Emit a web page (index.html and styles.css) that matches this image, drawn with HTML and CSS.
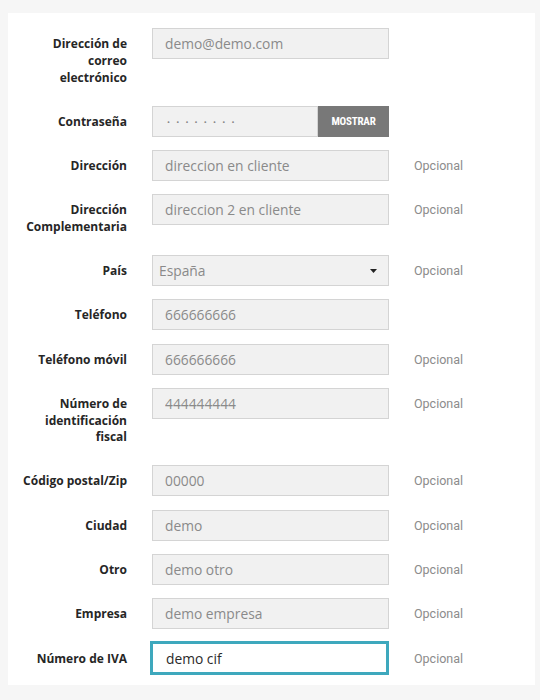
FILE: index.html
```html
<!DOCTYPE html>
<html lang="es">
<head>
<meta charset="utf-8">
<title>Datos del cliente</title>
<link rel="stylesheet" href="styles.css">
</head>
<body>
<main class="card">
  <form class="form">
    <div class="row">
      <label class="label" for="email">Dirección de correo electrónico</label>
      <div class="field"><input class="input" id="email" type="text" value="demo@demo.com"></div>
      <span class="note"></span>
    </div>
    <div class="row">
      <label class="label" for="pass">Contraseña</label>
      <div class="field group">
        <input class="input pass" id="pass" type="password" value="12345678">
        <button class="btn-show" type="button">MOSTRAR</button>
      </div>
      <span class="note"></span>
    </div>
    <div class="row">
      <label class="label" for="addr">Dirección</label>
      <div class="field"><input class="input" id="addr" type="text" value="direccion en cliente"></div>
      <span class="note">Opcional</span>
    </div>
    <div class="row">
      <label class="label" for="addr2">Dirección Complementaria</label>
      <div class="field"><input class="input" id="addr2" type="text" value="direccion 2 en cliente"></div>
      <span class="note">Opcional</span>
    </div>
    <div class="row">
      <label class="label" for="country">País</label>
      <div class="field select-wrap">
        <select class="input select" id="country"><option>España</option></select>
        <svg class="caret" width="7" height="4" viewBox="0 0 7 4"><path d="M0 0H7L3.5 4Z" fill="#222"/></svg>
      </div>
      <span class="note">Opcional</span>
    </div>
    <div class="row">
      <label class="label" for="tel">Teléfono</label>
      <div class="field"><input class="input" id="tel" type="text" value="666666666"></div>
      <span class="note"></span>
    </div>
    <div class="row">
      <label class="label" for="mob">Teléfono móvil</label>
      <div class="field"><input class="input" id="mob" type="text" value="666666666"></div>
      <span class="note">Opcional</span>
    </div>
    <div class="row">
      <label class="label" for="nif">Número de identificación fiscal</label>
      <div class="field"><input class="input" id="nif" type="text" value="444444444"></div>
      <span class="note">Opcional</span>
    </div>
    <div class="row">
      <label class="label" for="zip">Código postal/Zip</label>
      <div class="field"><input class="input" id="zip" type="text" value="00000"></div>
      <span class="note">Opcional</span>
    </div>
    <div class="row">
      <label class="label" for="city">Ciudad</label>
      <div class="field"><input class="input" id="city" type="text" value="demo"></div>
      <span class="note">Opcional</span>
    </div>
    <div class="row">
      <label class="label" for="other">Otro</label>
      <div class="field"><input class="input" id="other" type="text" value="demo otro"></div>
      <span class="note">Opcional</span>
    </div>
    <div class="row">
      <label class="label" for="company">Empresa</label>
      <div class="field"><input class="input" id="company" type="text" value="demo empresa"></div>
      <span class="note">Opcional</span>
    </div>
    <div class="row">
      <label class="label" for="vat">Número de IVA</label>
      <div class="field"><input class="input focused" id="vat" type="text" value="demo cif"></div>
      <span class="note">Opcional</span>
    </div>
  </form>
</main>
</body>
</html>
```
FILE: styles.css
```css
* { box-sizing: border-box; }
html, body { margin: 0; padding: 0; }
body {
  background: #f6f6f6;
  font-family: "Open Sans", "Noto Sans", sans-serif;
  color: #232323;
}
.card {
  background: #fff;
  margin: 13px 5px 0 8px;
  padding: 15px 0 8px 0;
  height: 672px;
}
.form {
  display: flex;
  flex-direction: column;
  gap: 13.3px;
}
.row {
  display: grid;
  grid-template-columns: 108px 237px auto;
  column-gap: 25px;
  padding-left: 11px;
  align-items: start;
}
.label {
  text-align: right;
  font-family: "Open Sans", "Noto Sans", sans-serif;
  font-weight: 700;
  font-size: 12px;
  line-height: 16.75px;
  padding: 8px 0 6px;
  color: #262626;
}
.field { position: relative; display: flex; }
.input {
  width: 100%;
  height: 31px;
  border: 1px solid #d4d4d4;
  background: #f1f1f1;
  font-family: "Open Sans", "Noto Sans", sans-serif;
  font-size: 13.8px;
  color: #8a8a8a;
  padding: 0 12px;
  outline: none;
  border-radius: 0;
}
.pass {
  flex: 1;
  font-size: 8px;
  letter-spacing: 6.2px;
  padding-left: 14px;
  color: #888;
}
.btn-show {
  flex: 0 0 71px;
  height: 31px;
  border: none;
  background: #787878;
  color: #fff;
  font-family: "Liberation Sans Narrow", "Roboto Condensed", Roboto, sans-serif;
  font-weight: 700;
  font-size: 11px;
  letter-spacing: -0.2px;
  padding: 0;
}
.select {
  appearance: none;
  -webkit-appearance: none;
  padding-left: 6px;
}
.caret {
  position: absolute;
  right: 12px;
  top: 14px;
}
.focused {
  height: 34px;
  margin: -1.5px 0 -1.5px -2px;
  width: calc(100% + 2px);
  border: 3px solid #3ea8bd;
  background: #fff;
  color: #2a2a2a;
  padding-left: 13px;
}
.note {
  font-family: Roboto, "Liberation Sans", sans-serif;
  font-size: 12.5px;
  color: #8c8c8c;
  line-height: 31px;
}
```
